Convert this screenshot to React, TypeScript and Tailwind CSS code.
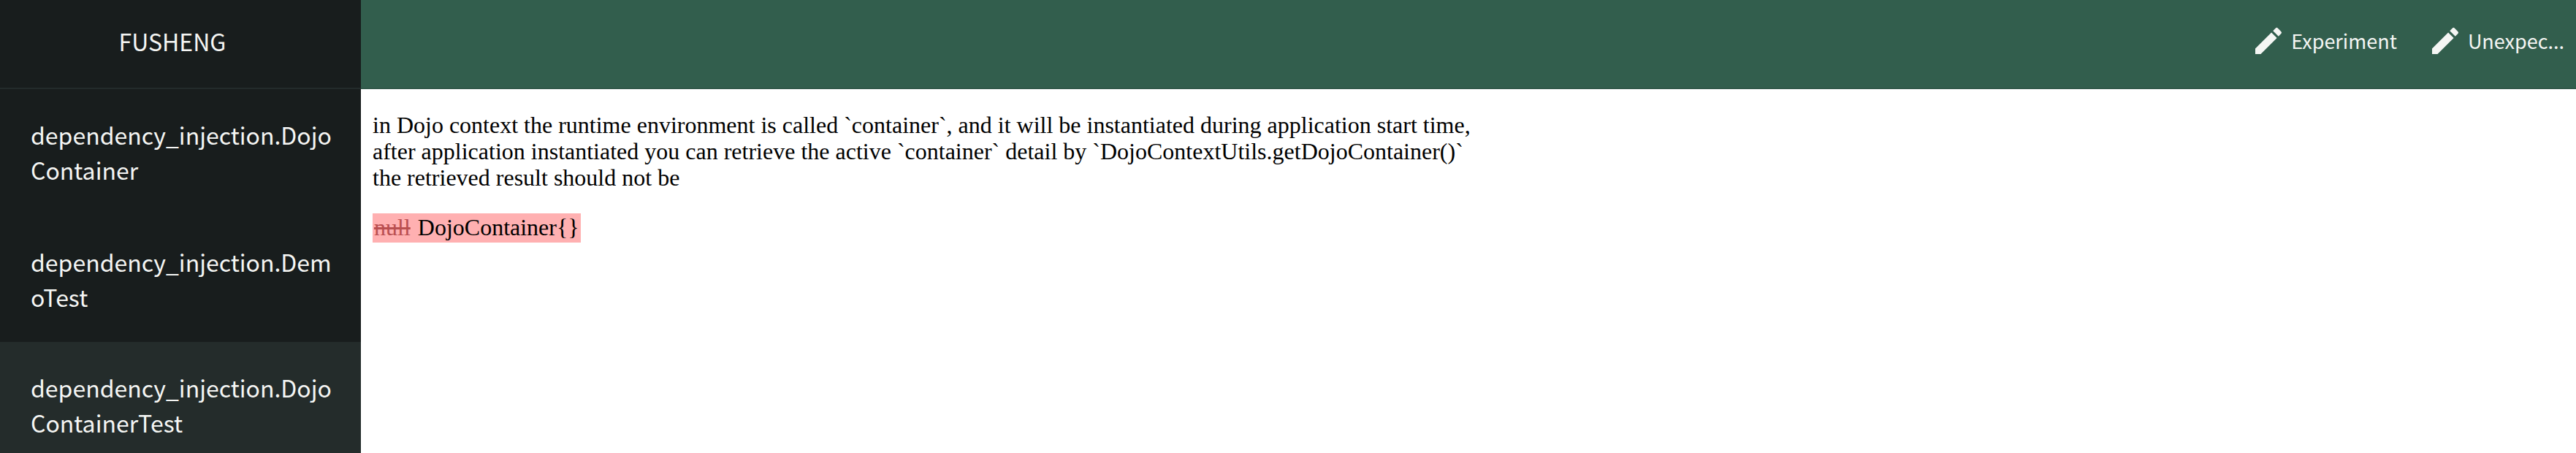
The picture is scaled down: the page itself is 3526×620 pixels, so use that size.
import { MdEdit } from "react-icons/md";

const sources = [{ name: "dependency_injection.DojoContainer", active: false }];

const tests = [
  { name: "dependency_injection.DemoTest", active: false },
  { name: "dependency_injection.DojoContainerTest", active: true },
];

const actions = ["Experiment", "Unexpec..."];

function FileLink({ name, active }: { name: string; active: boolean }) {
  return (
    <li>
      <a
        href="#"
        aria-current={active ? "page" : undefined}
        className={
          active
            ? "block break-all bg-[#242c2b] py-[38px] pr-8 pl-[42px] text-[32px] leading-[48px]"
            : "block break-all py-[38px] pr-8 pl-[42px] text-[32px] leading-[48px]"
        }
      >
        {name}
      </a>
    </li>
  );
}

export default function App() {
  return (
    <div className="flex min-h-screen bg-white">
      <aside className="w-[494px] shrink-0 bg-[#181d1d] font-['Noto_Sans_CJK_SC',sans-serif] text-[#f5f6f4]">
        <div className="flex h-[122px] items-center justify-center border-b-2 border-[#232b2b] pr-[22px] pb-2 text-[32px] leading-[48px]">
          FUSHENG
        </div>
        <nav className="flex flex-col gap-0.5">
          <ul>
            {sources.map((file) => (
              <FileLink key={file.name} {...file} />
            ))}
          </ul>
          <ul>
            {tests.map((file) => (
              <FileLink key={file.name} {...file} />
            ))}
          </ul>
        </nav>
      </aside>

      <div className="min-w-0 grow">
        <header className="flex h-[122px] items-center justify-end gap-[42px] border-b-2 border-[#315849] bg-[#325e4d] pr-4 pb-2 font-['Noto_Sans_CJK_SC',sans-serif] text-[27px] leading-[42px] text-[#f5f6f4]">
          {actions.map((label) => (
            <button key={label} type="button" className="flex items-center gap-[7px]">
              <MdEdit className="size-12" aria-hidden="true" />
              <span>{label}</span>
            </button>
          ))}
        </header>
        <main className="px-4 py-[31px] font-['Liberation_Serif',serif] text-[32px] leading-9 text-black">
          <p>
            in Dojo context the runtime environment is called `container`, and it will be instantiated during application start time,
            <br />
            after application instantiated you can retrieve the active `container` detail by `DojoContextUtils.getDojoContainer()`
            <br />
            the retrieved result should not be
          </p>
          <p className="mt-[31px] w-fit bg-[#ffb0b1] px-0.5 pt-px pb-[3px]">
            <del className="mr-0.5 text-[#b94f50]">null</del> DojoContainer{"{}"}
          </p>
        </main>
      </div>
    </div>
  );
}
